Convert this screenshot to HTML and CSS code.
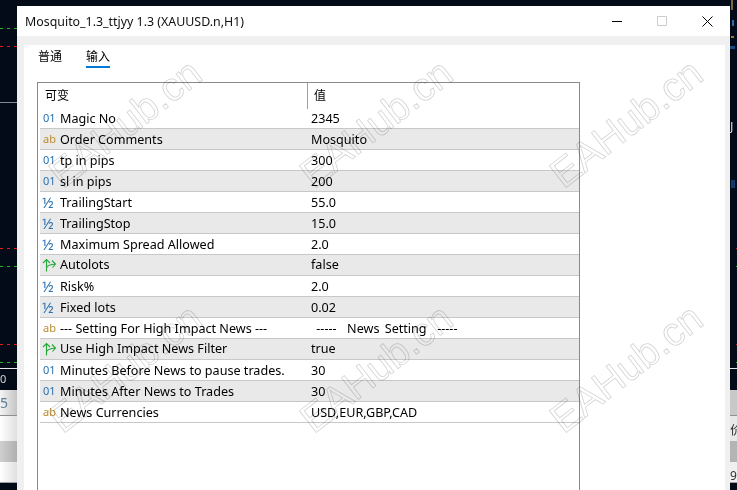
FILE: index.html
```html
<!DOCTYPE html>
<html>

<head>
  <title>Mosquito Inputs</title>
  <link rel="stylesheet" href="styles.css">
</head>

<body>
  <div class="desk">
    <div class="strip strip-left">
      <i class="dash dash-green dash-28"></i>
      <i class="dash dash-red dash-46"></i>
      <i class="hline hline-102"></i>
      <i class="dash dash-red dash-248"></i>
      <i class="dash dash-green dash-266"></i>
      <i class="dash dash-red dash-344"></i>
      <i class="dash dash-green dash-362"></i>
      <i class="hline hline-368"></i>
      <span class="chart-num num-left">0</span>
      <div class="list list-left">
        <div class="list-head">5</div>
        <div class="list-row"></div>
        <div class="list-row list-row-dark"></div>
        <div class="list-row list-row-last"></div>
      </div>
    </div>

    <div class="window">
      <div class="titlebar">
        <span class="title">Mosquito_1.3_ttjyy 1.3 (XAUUSD.n,H1)</span>
        <div class="controls">
          <svg width="10" height="10" viewBox="0 0 10 10"><path d="M0 5.5H10" stroke="#000" stroke-width="1"/></svg>
          <svg width="10" height="10" viewBox="0 0 10 10"><path d="M.5 .5H9.5V9.5H.5Z" fill="none" stroke="#ccc" stroke-width="1"/></svg>
          <svg width="11" height="11" viewBox="0 0 11 11"><path d="M.5 .5L10.5 10.5M10.5 .5L.5 10.5" stroke="#000" stroke-width="1"/></svg>
        </div>
      </div>
      <div class="body-area">
        <div class="panel">
          <div class="tabs">
            <span class="tab">普通</span>
            <span class="tab tab-active">输入</span>
          </div>
          <div class="grid-box">
            <div class="grid-head">
              <div class="head-name">可变</div>
              <div class="head-value">值</div>
            </div>
            <div class="row"><span class="ico ico-int">01</span><span class="name">Magic No</span><span class="val">2345</span></div>
            <div class="row"><span class="ico ico-str">ab</span><span class="name">Order Comments</span><span class="val">Mosquito</span></div>
            <div class="row"><span class="ico ico-int">01</span><span class="name">tp in pips</span><span class="val">300</span></div>
            <div class="row"><span class="ico ico-int">01</span><span class="name">sl in pips</span><span class="val">200</span></div>
            <div class="row"><span class="ico ico-dbl">½</span><span class="name">TrailingStart</span><span class="val">55.0</span></div>
            <div class="row"><span class="ico ico-dbl">½</span><span class="name">TrailingStop</span><span class="val">15.0</span></div>
            <div class="row"><span class="ico ico-dbl">½</span><span class="name">Maximum Spread Allowed</span><span class="val">2.0</span></div>
            <div class="row"><span class="ico"><svg width="15" height="14" viewBox="0 0 15 14"><path d="M4.5 13.5V1.5M1 5L4.5 1.5L8 5M4.5 10C5 7.5 8 6.5 13.5 6M10 2.5L13.5 6L10.5 9.5" fill="none" stroke="#22a83a" stroke-width="1.1"/></svg></span><span class="name">Autolots</span><span class="val">false</span></div>
            <div class="row"><span class="ico ico-dbl">½</span><span class="name">Risk%</span><span class="val">2.0</span></div>
            <div class="row"><span class="ico ico-dbl">½</span><span class="name">Fixed lots</span><span class="val">0.02</span></div>
            <div class="row"><span class="ico ico-str">ab</span><span class="name">--- Setting For High Impact News ---</span><span class="val val-pre"> -----  News Setting  -----</span></div>
            <div class="row"><span class="ico"><svg width="15" height="14" viewBox="0 0 15 14"><path d="M4.5 13.5V1.5M1 5L4.5 1.5L8 5M4.5 10C5 7.5 8 6.5 13.5 6M10 2.5L13.5 6L10.5 9.5" fill="none" stroke="#22a83a" stroke-width="1.1"/></svg></span><span class="name">Use High Impact News Filter</span><span class="val">true</span></div>
            <div class="row"><span class="ico ico-int">01</span><span class="name">Minutes Before News to pause trades.</span><span class="val">30</span></div>
            <div class="row"><span class="ico ico-int">01</span><span class="name">Minutes After News to Trades</span><span class="val">30</span></div>
            <div class="row"><span class="ico ico-str">ab</span><span class="name">News Currencies</span><span class="val">USD,EUR,GBP,CAD</span></div>
          </div>
        </div>
      </div>
    </div>

    <div class="strip strip-right">
      <i class="bit bit-c"></i>
      <i class="bit bit-d"></i>
      <i class="bit bit-e"></i>
      <i class="bit bit-f"></i>
      <span class="chart-num num-j">J</span>
      <i class="bit bit-g"></i>
      <i class="dash dash-red dash-248 dash-short"></i>
      <i class="dash dash-green dash-266 dash-short"></i>
      <i class="dash dash-red dash-344 dash-short"></i>
      <i class="dash dash-green dash-362 dash-short"></i>
      <i class="hline hline-368 hline-short"></i>
      <div class="list list-right">
        <div class="list-head"></div>
        <div class="list-row">价</div>
        <div class="list-row list-row-dark"></div>
        <div class="list-row list-row-last">9</div>
      </div>
    </div>
  </div>

  <div class="marks">
    <span class="mark">EAHub.cn</span>
    <span class="mark">EAHub.cn</span>
    <span class="mark">EAHub.cn</span>
    <span class="mark">EAHub.cn</span>
    <span class="mark">EAHub.cn</span>
    <span class="mark">EAHub.cn</span>
  </div>
</body>

</html>
```

FILE: styles.css
```css
html,
body {
  margin: 0;
  height: 490px;
  overflow: hidden;
}

body {
  position: relative;
  background-color: #020b17;
  font-family: "Noto Sans", "Noto Sans CJK SC", sans-serif;
  font-size: 12.6px;
  color: #000;
}

.desk {
  display: flex;
  height: 490px;
}

.strip {
  position: relative;
  background-color: #020b17;
}

.strip-left {
  width: 17px;
}

.strip-right {
  width: 7px;
  overflow: hidden;
}

.bit,
.dash,
.hline {
  position: absolute;
  display: block;
}

.dash {
  left: 0;
  width: 17px;
  height: 1px;
}

.dash-short {
  left: 6px;
  width: 1px;
}

.dash-green {
  background: repeating-linear-gradient(90deg, #1fb51f 0 3px, transparent 3px 7px);
}

.dash-red {
  background: repeating-linear-gradient(90deg, #e81818 0 3px, transparent 3px 7px);
}

.dash-28 { top: 28px; }
.dash-46 { top: 46px; }
.dash-248 { top: 248px; }
.dash-266 { top: 266px; }
.dash-344 { top: 344px; }
.dash-362 { top: 362px; }

.hline {
  left: 0;
  width: 17px;
  height: 1px;
}

.hline-short {
  width: 7px;
}

.hline-102 {
  top: 102px;
  background-color: #7e8a94;
}

.hline-368 {
  top: 368px;
  background-color: #e8e8e8;
}

.chart-num {
  position: absolute;
  color: #d8d8d8;
  line-height: 14px;
}

.num-left {
  top: 372px;
  left: 0;
  font-size: 11px;
}

.num-j {
  top: 120px;
  left: 0;
}

.list {
  position: absolute;
  top: 390px;
  left: 0;
  width: 100%;
  overflow: hidden;
}

.list-head {
  height: 25px;
  border-bottom: 1px solid #8f8f8f;
  background: linear-gradient(90deg, #f4f4f4, #c4c4c4);
  color: #5e7e96;
  line-height: 25px;
  font-size: 14px;
}

.list-row {
  height: 25px;
  background: linear-gradient(90deg, #fff, #e0e0e0);
  line-height: 28px;
  color: #333;
}

.list-row-dark {
  height: 21px;
  background: linear-gradient(90deg, #cfcfcf, #b0b0b0);
}

.list-row-last {
  height: 20px;
  border-bottom: 1px solid #a0a0a0;
}

.list-right .list-head {
  background: #c8c8c8;
}

.list-right .list-row {
  background: #e8e8e8;
}

.list-right .list-row-dark {
  background: #b4b4b4;
}

.list-right .list-row-last {
  background: #f0f0f0;
  font-size: 12px;
}

.bit-c {
  top: 0;
  left: 1px;
  width: 2px;
  height: 10px;
  background-color: #7a6a3a;
}

.bit-d {
  top: 20px;
  left: 2px;
  width: 2px;
  height: 6px;
  background-color: #2a6ea8;
}

.bit-e {
  top: 36px;
  left: 1px;
  width: 3px;
  height: 2px;
  background-color: #9a7a30;
}

.bit-f {
  top: 46px;
  left: 0;
  width: 5px;
  height: 3px;
  background-color: #184a80;
}

.bit-g {
  top: 180px;
  left: 1px;
  width: 4px;
  height: 8px;
  background-color: #123a68;
}

.window {
  display: flex;
  flex-direction: column;
  width: 713px;
  height: 484px;
  margin-top: 6px;
  background-color: #f0f0f0;
}

.titlebar {
  display: flex;
  align-items: center;
  justify-content: space-between;
  flex: none;
  height: 30px;
  padding: 0 17px 0 8px;
  background-color: #fff;
}

.title {
  font-size: 12.4px;
  color: #111;
}

.controls {
  display: flex;
  align-items: center;
  gap: 35px;
}

.body-area {
  flex: 1;
  display: flex;
  padding: 9px 5px 0 7px;
  min-height: 0;
}

.panel {
  flex: 1;
  padding: 0 0 0 13px;
  background-color: #fff;
}

.tabs {
  display: flex;
  gap: 24px;
  height: 37px;
  padding-left: 1px;
}

.tab {
  height: 21px;
  line-height: 23px;
  font-size: 12px;
}

.tab-active {
  border-bottom: 2px solid #0078d7;
}

.grid-box {
  width: 540px;
  height: 407px;
  padding-left: 1px;
  border: 1px solid #8a8a8a;
  border-bottom: none;
}

.grid-head {
  display: grid;
  grid-template-columns: 268px 1fr;
  height: 25px;
  line-height: 26px;
  font-size: 12px;
}

.head-name {
  padding-left: 6px;
}

.head-value {
  padding-left: 6px;
  border-left: 1px solid #a0a0a0;
}

.row {
  display: grid;
  grid-template-columns: 20px 248px 1fr;
  align-items: center;
  width: 539px;
  height: 20px;
  margin-left: 1px;
  border-bottom: 1px solid #c8c8c8;
  line-height: 20px;
  white-space: nowrap;
}

.row:nth-of-type(odd) {
  background-color: #e9e9e9;
}

.ico {
  display: flex;
  align-items: center;
  padding-left: 3px;
  padding-bottom: 2px;
  font-size: 11px;
}

.ico svg {
  flex: none;
  margin-left: -1px;
  margin-bottom: -2px;
}

.ico-int {
  color: #2a72b0;
}

.ico-str {
  color: #bb8a30;
}

.ico-dbl {
  padding-left: 2px;
  color: #2a72b0;
  font-size: 15px;
}

.val {
  padding-left: 3px;
}

.val-pre {
  white-space: pre;
  word-spacing: 2px;
}

/* watermark sits on top of everything, multiply keeps the labels readable */
.marks {
  position: absolute;
  top: 0;
  left: 0;
  display: grid;
  grid-template-columns: 250px 253px 234px;
  grid-template-rows: 245px 245px;
  width: 737px;
  height: 490px;
  overflow: hidden;
  pointer-events: none;
  mix-blend-mode: multiply;
}

.mark {
  place-self: center;
  transform: rotate(-38deg);
  font-family: "Liberation Sans", sans-serif;
  font-size: 40px;
  line-height: 46px;
  color: transparent;
  -webkit-text-stroke: 0.8px #d4d4d4;
}

.mark:nth-child(3n) {
  margin-left: 12px;
}
```
